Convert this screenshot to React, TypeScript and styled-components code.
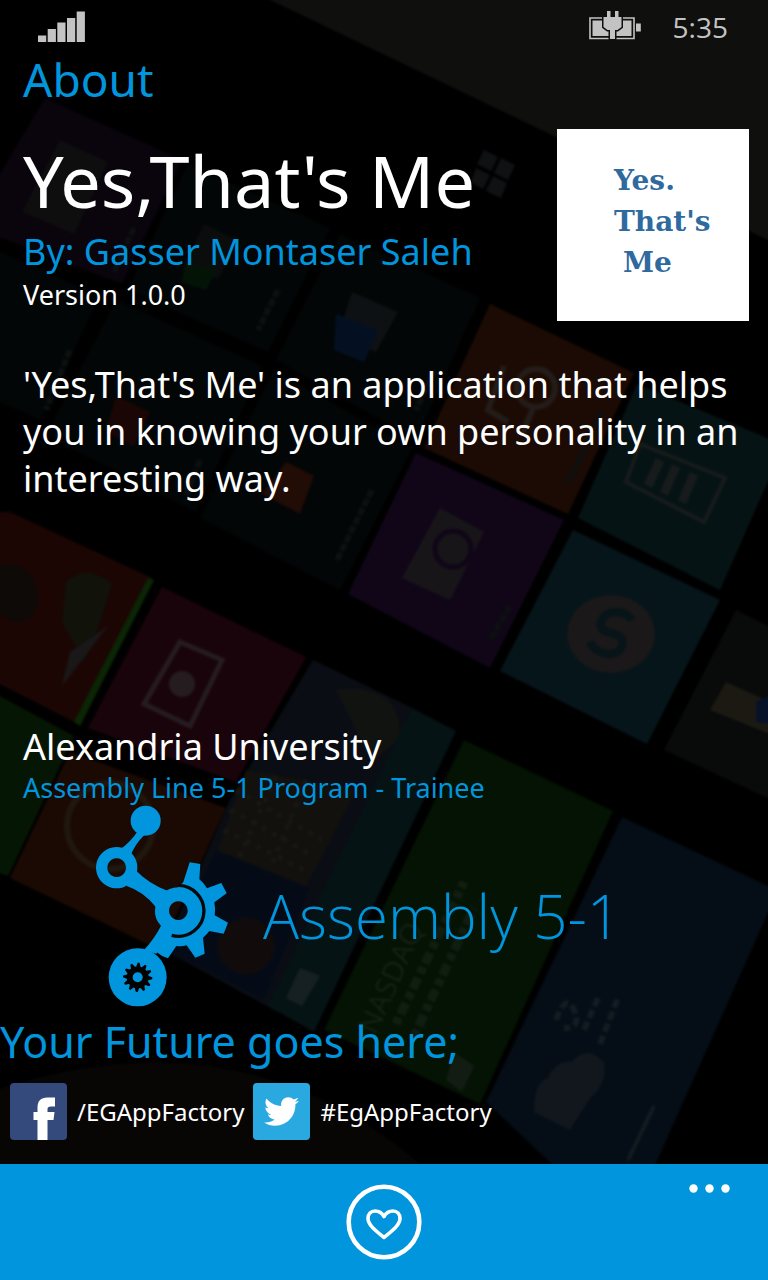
import React from "react";
import styled, { createGlobalStyle } from "styled-components";
import { FaTwitter } from "react-icons/fa";

const ACCENT = "#0095dd";

const GlobalStyle = createGlobalStyle`
  *, *::before, *::after { box-sizing: border-box; }
  body { margin: 0; background: #000; }
  h1, h2, h3, p { margin: 0; font-weight: 400; }
`;

const Screen = styled.div`
  position: relative;
  isolation: isolate;
  display: flex;
  flex-direction: column;
  min-height: 100vh;
  overflow: hidden;
  background: #000;
  color: #fff;
  font-family: "Noto Sans", "Open Sans", sans-serif;
`;

const BackdropSvg = styled.svg`
  position: absolute;
  inset: 0;
  z-index: -1;
  width: 100%;
  height: 100%;
`;

const StatusBar = styled.div`
  display: flex;
  align-items: center;
  height: 48px;
  padding: 6px 40px 0 38px;
  color: #c3c3c3;
`;

const Clock = styled.time`
  margin-left: 32px;
  font-family: "Open Sans", "Noto Sans", sans-serif;
  font-size: 28px;
  line-height: 36px;
`;

const BatteryIcon = styled.svg`
  margin-left: auto;
`;

const Main = styled.main`
  flex: 1;
  display: flex;
  flex-direction: column;
`;

const PageTitle = styled.h2`
  padding: 0 23px;
  color: ${ACCENT};
  font-size: 46px;
  line-height: 62px;
`;

const Header = styled.header`
  display: flex;
  justify-content: space-between;
  padding: 19px 19px 0 23px;
`;

const Heading = styled.div`
  padding-top: 5px;
`;

const AppName = styled.h1`
  font-size: 72px;
  line-height: 92px;
  white-space: nowrap;
`;

const Line = styled.p<{ $size: number; $height: number; $accent?: boolean }>`
  font-size: ${(p) => p.$size}px;
  line-height: ${(p) => p.$height}px;
  color: ${(p) => (p.$accent ? ACCENT : "inherit")};
`;

const AppTile = styled.div`
  flex: none;
  width: 192px;
  height: 192px;
  padding: 31px 0 0 57px;
  background: #fff;
  color: #2f6a9f;
  font-family: "DejaVu Serif", serif;
  font-size: 28px;
  font-weight: 700;
  line-height: 41px;
`;

const TileWord = styled.div<{ $indent?: boolean }>`
  padding-left: ${(p) => (p.$indent ? 9 : 0)}px;
`;

const Description = styled.p`
  padding: 40px 23px;
  font-size: 36px;
  line-height: 47px;
`;

const Affiliation = styled.section`
  margin-top: auto;
  padding: 0 23px;
`;

const Brand = styled.div`
  display: flex;
  align-items: center;
  gap: 35px;
  padding-left: 96px;
`;

const BrandName = styled.h3`
  padding-top: 20px;
  color: ${ACCENT};
  font-family: "Open Sans", "Noto Sans", sans-serif;
  font-size: 60px;
  font-weight: 300;
  line-height: 84px;
`;

const Slogan = styled.p`
  padding-top: 4px;
  color: ${ACCENT};
  font-size: 43px;
  line-height: 62px;
`;

const Social = styled.nav`
  display: flex;
  gap: 9px;
  padding: 10px 10px 24px;
`;

const SocialLink = styled.a`
  display: flex;
  align-items: center;
  gap: 10px;
  color: #fff;
  font-size: 24px;
  line-height: 36px;
  text-decoration: none;
`;

const Badge = styled.span<{ $color: string }>`
  display: flex;
  align-items: center;
  justify-content: center;
  width: 57px;
  height: 57px;
  border-radius: 4px;
  background: ${(p) => p.$color};
`;

const AppBar = styled.footer`
  display: grid;
  grid-template-columns: 1fr auto 1fr;
  height: 116px;
  padding: 20px 38px 0;
  background: ${ACCENT};
`;

const BarButton = styled.button<{ $end?: boolean }>`
  display: block;
  grid-column: ${(p) => (p.$end ? 3 : 2)};
  justify-self: ${(p) => (p.$end ? "end" : "center")};
  align-self: start;
  padding: 0;
  border: 0;
  background: none;
  color: #fff;
  line-height: 0;
`;

function Backdrop() {
  return (
    <BackdropSvg viewBox="0 0 768 1280" preserveAspectRatio="xMidYMin slice" aria-hidden="true">
      <defs>
        <filter id="soft" x="-5%" y="-5%" width="110%" height="110%" colorInterpolationFilters="sRGB">
          <feGaussianBlur stdDeviation="1.2" />
        </filter>
      </defs>
      <g filter="url(#soft)">
        <path d="M262-4L556 137 772 242V-4z" fill="#0f0f0e" />
        <path d="M45 98L182 160 122 284-4 236V180z" fill="#0a040d" />
        <path d="M60 140L108 162 74 234 22 212z" fill="#0e0e0e" />
        <g fill="#030606">
          <path d="M188 164L330 228 268 352 128 290z" />
          <path d="M340 234L480 298 416 440 276 360z" />
          <path d="M116 300L262 366 196 512 46 436z" />
          <path d="M274 370L412 448 340 590 200 518z" />
          <path d="M-4 250L100 296 40 420-4 400z" />
        </g>
        <path d="M736 610L772 628V800L664 750z" fill="#090a0a" />
        <path d="M484 150l14 7-7 14-14-7zM501 158l14 7-7 15-14-7zM476 168l14 7-7 14-12-7zM493 176l14 7-6 15-15-7z" fill="#101112" />
        <path d="M204 224l34 17-20 38-34-14z" fill="#0b0d0d" />
        <path d="M186 262l30 8-10 20-24-8z" fill="#031407" />
        <path d="M352 292l46 20-22 40-38-16z" fill="#0e1114" />
        <path d="M336 314l42 16-14 32-30-12z" fill="#041022" />
        <path d="M116 396l34 16-16 34-28-14z" fill="#1b0606" />
        <path d="M286 462l28 14-14 38-38-20z" fill="#210c06" />

        <path d="M490 304L634 373 568 514 424 448z" fill="#1c0b04" />
        <g fill="none" stroke="#231c18" strokeWidth="6">
          <circle cx="536" cy="388" r="19" />
          <path d="M504 366l-16 44 20 12M534 406l-12 28" />
        </g>
        <path d="M637 384L772 440V472L720 590 578 518z" fill="#061315" />
        <g fill="none" stroke="#171b1b" strokeWidth="4">
          <path d="M640 444L725 478 704 522 626 482z" />
          <path d="M660 460l-12 26M676 466l-12 28M694 474l-12 28" strokeWidth="9" />
        </g>
        <path d="M416 453L564 520 490 668 348 594z" fill="#100618" />
        <path d="M440 508L484 532 450 600 402 578z" fill="#181519" />
        <circle cx="453" cy="549" r="18" fill="#181519" stroke="#100618" strokeWidth="5" />
        <path d="M573 530L720 600 647 744 500 671z" fill="#06151a" />
        <ellipse cx="611" cy="634" rx="44" ry="39" fill="#1a1819" />
        <path d="M632 620c-8-12-28-10-31 2-4 16 26 6 21 24-4 12-26 10-32-4" fill="none" stroke="#071418" strokeWidth="8" />
        <path d="M726 682l44 20v32l-60-24z" fill="#1b1912" />
        <path d="M756 702l16-8v30l-16-2z" fill="#071127" />

        <path d="M10 512L152 578 78 724-4 682V512z" fill="#1b0604" />
        <path d="M148 578l6 2-74 146-6-4z" fill="#0b2604" />
        <path d="M0 564q38-2 38 40-12 30-38 10z" fill="#0d0a08" />
        <path d="M66 582q20-20 46 2l-14 44-14 34-22-40z" fill="#11120a" />
        <path d="M108 626l-46 60 8-34z" fill="#1a1718" />
        <path d="M162 587L306 657 236 782 88 728z" fill="#1a040c" />
        <path d="M180 642l42 18-32 66-46-22z" fill="none" stroke="#251c20" strokeWidth="5" />
        <circle cx="182" cy="684" r="13" fill="#251c20" />
        <path d="M-4 694L74 736 8 876-4 872z" fill="#061604" />
        <path d="M70 752L226 808 160 950 10 878z" fill="#1b0a03" />
        <circle cx="110" cy="826" r="43" fill="none" stroke="#20170f" strokeWidth="6" />
        <path d="M313 660L412 708 278 1012 164 950 230 800z" fill="#0a0e14" />
        <path d="M336 690q66-8 64 48l-28 24z" fill="#10130f" />
        <path d="M246 770l110 20-50 96-92-24z" fill="#12110d" />
        <path d="M236 790l86 50M230 810l84 46M224 830l80 40M276 776l-38 84M306 780l-34 84" stroke="#1a1713" strokeWidth="5" strokeDasharray="5 7" fill="none" />
        <path d="M216 850l94 38-46 112-98-50z" fill="#050b16" />
        <circle cx="246" cy="946" r="28" fill="#120b0b" />
        <path d="M412 708L456 731 314 1032 268 1006z" fill="#051315" />
        <path d="M300 968l20 8-18 30-16-8z" fill="#172021" />
        <path d="M464 740L613 811 480 1104 324 1030z" fill="#041303" />
        <path d="M454 1052l20 14-12 26-16-12z" fill="#131c12" />
        <path d="M622 817L772 888V904L652 1172H560L486 1102z" fill="#050d16" />
        <path d="M572 1062q14-18 32 0 4 22-14 36l-20 32-36-18q0-30 14-34 8-18 24-16z" fill="#12171d" />
        <g fill="none" stroke="#141b21" strokeWidth="6">
          <path d="M556 1020q10-28 18-10t-10 18M584 1030l14-32M600 1044l18-46" strokeDasharray="9 4" />
          <path d="M654 1106l-26 54" strokeWidth="4" />
        </g>
        <g fill="none" stroke="#0d1010" strokeWidth="6" strokeDasharray="8 2">
          <path d="M134 228l-20 44M70 350l-24 60M278 290l-20 40M434 370l-18 40M200 460l-14 36M372 490l-36 72M510 606l-20 34M602 412l-34 72" />
        </g>
        <path d="M-4 1090Q240 1010 420 1164H-4z" fill="#080605" />
        <text
          transform="translate(376 1036) rotate(-66)"
          fill="#152114"
          fontFamily="Open Sans, sans-serif"
          fontSize="29"
        >
          NASDAQ
        </text>
        <path d="M396 1024l68-142M414 1036l60-128" fill="none" stroke="#121d11" strokeWidth="9" strokeDasharray="7 4 12 5" />
      </g>
    </BackdropSvg>
  );
}

function SignalIcon() {
  return (
    <svg width="47" height="32" viewBox="0 0 47 32" fill="currentColor" role="img" aria-label="Signal">
      <path d="M0 24.500h8.200V31H0zM9.700 18h8.200v13H9.700zM19.300 11.500h8.200V31h-8.200zM29 7h8.200v24H29zM38.700 .5h8.200V31h-8.200z" />
    </svg>
  );
}

function Battery() {
  return (
    <BatteryIcon width="52" height="32" viewBox="0 0 52 32" role="img" aria-label="Battery charging">
      <path d="M1 7h44v20.500H1z" fill="none" stroke="currentColor" strokeWidth="1.600" />
      <path d="M3.500 9.500h39v15.500h-39zM47 12.500h4.800v8H47z" fill="currentColor" />
      <path
        d="M18 0h3.500v6h4.500V0h3.500v6h3v10l-4 3h-2.500v9h-5v-9h-2.500l-4-3V6h3.500z"
        fill="currentColor"
        stroke="#0f0f0e"
        strokeWidth="3"
        paintOrder="stroke"
      />
    </BatteryIcon>
  );
}

function AssemblyLogo() {
  const cog: string[] = [];
  for (let i = 0; i < 48; i++) {
    const r = i % 4 < 2 ? 44 : 33;
    const a = (i / 48) * Math.PI * 2;
    cog.push(`${(233 + r * Math.cos(a)).toFixed(1)},${(562 + r * Math.sin(a)).toFixed(1)}`);
  }
  return (
    <svg width="132" height="202" viewBox="108 45 396 606" fill={ACCENT} role="img" aria-label="Assembly 5-1 logo">
      <circle cx="257" cy="92" r="45" />
      <path d="M234 122Q212 156 180 178L212 198Q222 165 254 134z" />
      <path fillRule="evenodd" d="M170 171a62 62 0 1 0 .1 0zM170 205a28 28 0 1 1-.1 0z" />
      <path d="M226 240Q270 284 322 302L288 352Q252 305 200 288z" />
      <path
        fillRule="evenodd"
        d="M370 276L389 217L421 222L418 268Q432 279 441 295L484 279L500 310L463 337Q467 357 464 376L504 398L491 431L448 423Q440 434 429 443L434 491L406 503L380 466Q365 470 349 468L324 505L290 492L252 480Q286 442 303 407Q284 388 285 362A70 70 0 0 1 355 292zM355 334a28 28 0 1 0 .1 0z"
      />
      <path
        d="M357 286A78 78 0 0 1 432 362A77 77 0 0 1 335 436"
        fill="none"
        stroke="#05080a"
        strokeWidth="10"
      />
      <circle cx="233" cy="562" r="87" />
      <polygon points={cog.join(" ")} fill="#000" />
      <circle cx="233" cy="562" r="15" />
      <path d="M290 490q24 14 30 34" stroke="#000" strokeWidth="5" fill="none" />
    </svg>
  );
}

export default function App() {
  return (
    <Screen>
      <GlobalStyle />
      <Backdrop />
      <StatusBar>
        <SignalIcon />
        <Battery />
        <Clock>5:35</Clock>
      </StatusBar>
      <Main>
        <PageTitle>About</PageTitle>
        <Header>
          <Heading>
            <AppName>Yes,That's Me</AppName>
            <Line $size={36} $height={52} $accent>By: Gasser Montaser Saleh</Line>
            <Line $size={27} $height={34}>Version 1.0.0</Line>
          </Heading>
          <AppTile>
            <TileWord>Yes.</TileWord>
            <TileWord>That's</TileWord>
            <TileWord $indent>Me</TileWord>
          </AppTile>
        </Header>
        <Description>
          'Yes,That's Me' is an application that helps you in knowing your own personality in an interesting way.
        </Description>
        <Affiliation>
          <Line $size={36} $height={48}>Alexandria University</Line>
          <Line $size={27} $height={34} $accent>Assembly Line 5-1 Program - Trainee</Line>
        </Affiliation>
        <Brand>
          <AssemblyLogo />
          <BrandName>Assembly 5-1</BrandName>
        </Brand>
        <Slogan>Your Future goes here;</Slogan>
        <Social>
          <SocialLink href="#facebook">
            <Badge $color="#354a7c">
              <svg width="57" height="57" viewBox="0 0 57 57" fill="#fff" aria-hidden="true">
                <path d="M27.500 57V37H23.500V29h4v-4c0-7 3-10.500 10-10.500h7.500v9h-4c-2.500 0-3.500 .8-3.500 3V29h7l-1 8h-6v20z" />
              </svg>
            </Badge>
            /EGAppFactory
          </SocialLink>
          <SocialLink href="#twitter">
            <Badge $color="#2aa9e0">
              <FaTwitter size={35} aria-hidden="true" />
            </Badge>
            #EgAppFactory
          </SocialLink>
        </Social>
      </Main>
      <AppBar>
        <BarButton type="button" aria-label="Favourite">
          <svg width="76" height="76" viewBox="0 0 76 76" fill="none" stroke="currentColor" strokeLinejoin="round">
            <circle cx="38" cy="38" r="35.300" strokeWidth="4.600" />
            <path d="M38 53.500C30 47 22 41 22 34.500C22 30 25 27 29 27C33 27 36 29 38 32.500C40 29 43 27 47 27C51 27 54 30 54 34.500C54 41 46 47 38 53.500z" strokeWidth="3.600" />
          </svg>
        </BarButton>
        <BarButton type="button" aria-label="More" $end>
          <svg width="41" height="9" viewBox="0 0 41 9" fill="currentColor">
            <circle cx="4.500" cy="4.500" r="4.200" />
            <circle cx="20.500" cy="4.500" r="4.200" />
            <circle cx="36.500" cy="4.500" r="4.200" />
          </svg>
        </BarButton>
      </AppBar>
    </Screen>
  );
}
